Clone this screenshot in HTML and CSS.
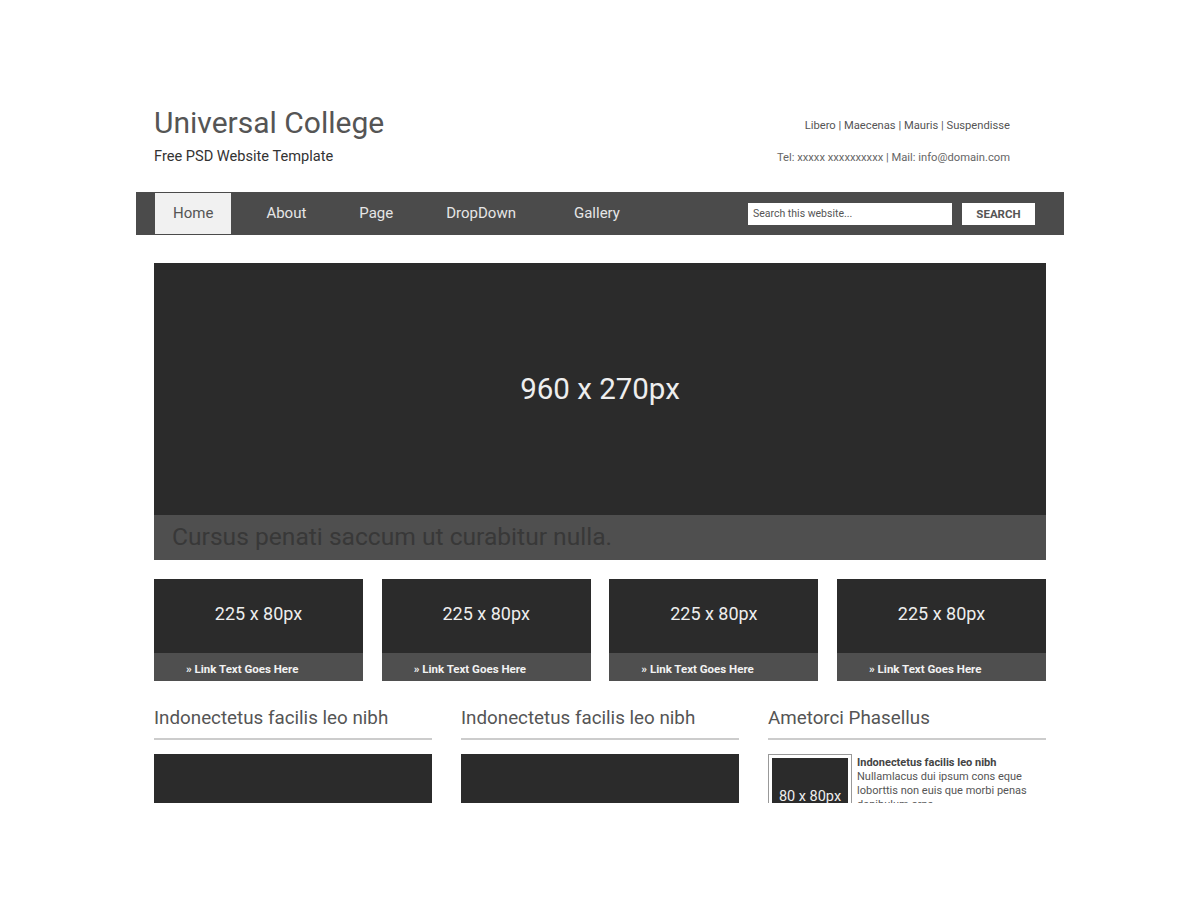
FILE: index.html
```html
<!DOCTYPE html>
<html lang="en">
<head>
<meta charset="utf-8">
<title>Universal College</title>
<link rel="stylesheet" href="styles.css">
</head>
<body>
<div class="page">
  <header class="header">
    <div class="brand">
      <h1 class="brand-title">Universal College</h1>
      <p class="brand-sub">Free PSD Website Template</p>
    </div>
    <div class="meta">
      <p class="meta-links">Libero | Maecenas | Mauris | Suspendisse</p>
      <p class="meta-contact">Tel: xxxxx xxxxxxxxxx | Mail: info@domain.com</p>
    </div>
  </header>

  <nav class="nav">
    <ul class="nav-list">
      <li class="nav-item nav-item-active">Home</li>
      <li class="nav-item">About</li>
      <li class="nav-item">Page</li>
      <li class="nav-item">DropDown</li>
      <li class="nav-item nav-item-wide">Gallery</li>
    </ul>
    <form class="search">
      <input class="search-input" type="text" placeholder="Search this website...">
      <button class="search-btn" type="button">SEARCH</button>
    </form>
  </nav>

  <main class="content">
    <section class="hero">
      <div class="hero-img">960 x 270px</div>
      <div class="hero-caption">Cursus penati saccum ut curabitur nulla.</div>
    </section>

    <section class="cards">
      <div class="card"><div class="card-img">225 x 80px</div><div class="card-link">» Link Text Goes Here</div></div>
      <div class="card"><div class="card-img">225 x 80px</div><div class="card-link">» Link Text Goes Here</div></div>
      <div class="card"><div class="card-img">225 x 80px</div><div class="card-link">» Link Text Goes Here</div></div>
      <div class="card"><div class="card-img">225 x 80px</div><div class="card-link">» Link Text Goes Here</div></div>
    </section>

    <section class="columns">
      <div class="col">
        <h2 class="col-title">Indonectetus facilis leo nibh</h2>
        <div class="col-img"></div>
      </div>
      <div class="col">
        <h2 class="col-title">Indonectetus facilis leo nibh</h2>
        <div class="col-img"></div>
      </div>
      <div class="col">
        <h2 class="col-title">Ametorci Phasellus</h2>
        <div class="post">
          <div class="thumb"><div class="thumb-inner">80 x 80px</div></div>
          <div class="post-text">
            <p class="post-title">Indonectetus facilis leo nibh</p>
            <p class="post-body">Nullamlacus dui ipsum cons eque loborttis non euis que morbi penas dapibulum orna.</p>
          </div>
        </div>
      </div>
    </section>
  </main>
</div>
</body>
</html>
```

FILE: styles.css
```css
* { box-sizing: border-box; }
html, body { margin: 0; padding: 0; background: #fff; }
body { font-family: Roboto, "Liberation Sans", Arial, sans-serif; color: #444; }
p, h1, h2, ul { margin: 0; padding: 0; }

.page {
  width: 928px;
  margin: 0 auto;
  height: 803px;
  overflow: hidden;
}

.header {
  display: flex;
  justify-content: space-between;
  padding: 105px 54px 0 18px;
  height: 192px;
}
.brand-title {
  font-weight: 400;
  font-size: 30px;
  line-height: 36px;
  color: #555;
}
.brand-sub {
  margin-top: 6px;
  font-size: 14.6px;
  line-height: 18px;
  color: #333;
}
.meta { text-align: right; padding-top: 14px; }
.meta-links { font-size: 11.2px; line-height: 14px; color: #555; }
.meta-contact { margin-top: 18px; font-size: 11.2px; line-height: 14px; color: #666; }

.nav {
  display: flex;
  align-items: center;
  justify-content: space-between;
  height: 43px;
  background: #4b4b4b;
  padding: 0 29px 0 19px;
}
.nav-list {
  list-style: none;
  display: flex;
  height: 41px;
  gap: 17px;
}
.nav-item {
  padding: 0 18px;
  line-height: 41px;
  font-size: 15px;
  color: #e6e6e6;
}
.nav-item-active {
  background: #f1f1f1;
  color: #555;
}
.nav-item-wide { margin-left: 5px; }
.search { display: flex; gap: 10px; }
.search-input {
  width: 204px;
  height: 22px;
  border: 0;
  padding: 0 5px;
  font-family: Roboto, "Liberation Sans", Arial, sans-serif;
  font-size: 10.5px;
  color: #555;
  background: #fff;
  outline: none;
}
.search-input::placeholder { color: #555; }
.search-btn {
  width: 73px;
  height: 22px;
  border: 0;
  background: #fff;
  font-family: Roboto, "Liberation Sans", Arial, sans-serif;
  font-weight: 700;
  font-size: 11.5px;
  color: #555;
  padding: 0;
}

.content { padding: 28px 18px 0; }

.hero { background: #2b2b2b; height: 297px; display: flex; flex-direction: column; }
.hero-img {
  flex: 1;
  display: flex;
  align-items: center;
  justify-content: center;
  color: #eee;
  font-size: 29.5px;
  padding-bottom: 1px;
}
.hero-caption {
  height: 45px;
  background: #4f4f4f;
  color: #383838;
  font-size: 24.6px;
  line-height: 43px;
  padding-left: 18px;
}

.cards {
  display: grid;
  grid-template-columns: repeat(4, 1fr);
  gap: 18.7px;
  margin-top: 19px;
}
.card { height: 102px; display: flex; flex-direction: column; background: #2b2b2b; }
.card-img {
  height: 74px;
  flex-shrink: 0;
  display: flex;
  align-items: center;
  justify-content: center;
  color: #eee;
  font-size: 18px;
  padding-bottom: 5px;
}
.card-link {
  height: 28px;
  background: #4f4f4f;
  color: #f2f2f2;
  font-size: 11.5px;
  font-weight: 700;
  line-height: 28px;
  padding: 2px 0 0 32px;
  overflow: hidden;
}

.columns {
  display: grid;
  grid-template-columns: repeat(3, 1fr);
  gap: 29px;
  margin-top: 24px;
}
.col-title {
  font-weight: 400;
  font-size: 18.8px;
  line-height: 24px;
  color: #555;
  padding-bottom: 8px;
  border-bottom: 2px solid #ccc;
  margin-top: 1px;
}
.col-img { margin-top: 14px; height: 60px; background: #2b2b2b; }

.post { display: flex; gap: 5px; margin-top: 14px; }
.thumb {
  width: 84px;
  height: 84px;
  border: 1px solid #999;
  padding: 3px;
  flex-shrink: 0;
}
.thumb-inner {
  height: 100%;
  background: #2b2b2b;
  color: #eee;
  font-size: 14.5px;
  display: flex;
  align-items: center;
  justify-content: center;
}
.post-text { font-size: 11px; line-height: 14px; color: #555; padding-top: 2px; }
.post-title { font-weight: 700; color: #444; }
.post-body { color: #555; }
```
